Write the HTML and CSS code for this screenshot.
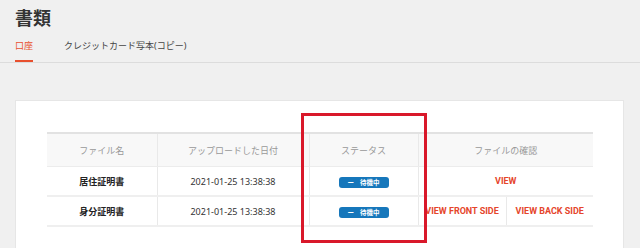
FILE: index.html
```html
<!DOCTYPE html>
<html lang="ja">
<head>
<meta charset="utf-8">
<link rel="stylesheet" href="styles.css">
</head>
<body>
<div class="page">
  <header class="head">
    <h1 class="title">書類</h1>
    <nav class="tabs">
      <span class="tab active">口座</span>
      <span class="tab">クレジットカード写本(コピー)</span>
    </nav>
  </header>
  <section class="card">
    <table class="docs">
      <colgroup>
        <col class="c1"><col class="c2"><col class="c3"><col class="c4a"><col class="c4b">
      </colgroup>
      <thead>
        <tr class="hrow">
          <th>ファイル名</th>
          <th>アップロードした日付</th>
          <th>ステータス</th>
          <th colspan="2">ファイルの確認</th>
        </tr>
      </thead>
      <tbody>
        <tr class="row r1">
          <td class="name">居住証明書</td>
          <td class="date">2021-01-25 13:38:38</td>
          <td><span class="badge"><span class="dash">ー</span>待機中</span></td>
          <td colspan="2" class="link">VIEW</td>
        </tr>
        <tr class="row r2">
          <td class="name">身分証明書</td>
          <td class="date">2021-01-25 13:38:38</td>
          <td><span class="badge"><span class="dash">ー</span>待機中</span></td>
          <td class="link">VIEW FRONT SIDE</td>
          <td class="link">VIEW BACK SIDE</td>
        </tr>
      </tbody>
    </table>
    <div class="highlight"></div>
  </section>
</div>
</body>
</html>
```
FILE: styles.css
```css
html, body {
  margin: 0;
  padding: 0;
  background: #f0f0f0;
  font-family: "Noto Sans", "Noto Sans CJK JP", sans-serif;
  color: #333;
}
.page {
  width: 640px;
  height: 248px;
  overflow: hidden;
}
.head {
  padding: 6px 0 0 0;
  border-bottom: 1px solid #dcdcdc;
}
.title {
  margin: 0 0 0 15px;
  font-size: 18px;
  line-height: 24px;
  font-weight: 700;
  color: #333;
}
.tabs {
  display: flex;
  gap: 31px;
  margin: 8px 0 0 15px;
}
.tab {
  font-size: 9px;
  line-height: 12px;
  padding: 2px 0 10px 0;
  color: #444;
}
.tab.active {
  color: #e8502e;
  border-bottom: 2px solid #e8502e;
  padding-bottom: 8px;
}
.card {
  position: relative;
  margin: 37px 16px 0 15px;
  background: #fff;
  border: 1px solid #e6e6e6;
  padding: 31px 31px 40px 31px;
}
.docs {
  width: 546px;
  border-collapse: collapse;
  table-layout: fixed;
}
.c1 { width: 110px; }
.c2 { width: 152px; }
.c3 { width: 109px; }
.c4a { width: 88px; }
.c4b { width: 87px; }
.docs th, .docs td {
  text-align: center;
  font-size: 9px;
  padding: 0;
  border-left: 1px solid #e9e9e9;
  border-right: 1px solid #e9e9e9;
  white-space: nowrap;
}
.docs tr > :first-child { border-left: none; }
.docs tr > :last-child { border-right: none; }
.hrow th {
  height: 32px;
  background: #f8f8f8;
  color: #999;
  font-weight: 400;
  border-top: 2px solid #e2e2e2;
  border-bottom: 1px solid #ececec;
}
.row td {
  height: 28px;
  border-bottom: 2px solid #efefef;
}
.name { font-weight: 700; color: #222; }
.date { color: #333; }
.link {
  color: #e5452b;
  font-weight: 700;
  font-size: 8.5px;
  font-family: "Roboto", "Noto Sans", sans-serif;
}
.badge {
  display: inline-flex;
  align-items: center;
  justify-content: center;
  width: 50px;
  height: 11px;
  background: #1677bb;
  color: #fff;
  border-radius: 3px;
  font-size: 6.5px;
  font-weight: 700;
  line-height: 11px;
  gap: 6px;
  vertical-align: middle;
}
.dash { font-size: 6.5px; }
.highlight {
  position: absolute;
  left: 285px;
  top: 12px;
  width: 120px;
  height: 124px;
  border: 3px solid #d9182a;
}
```
